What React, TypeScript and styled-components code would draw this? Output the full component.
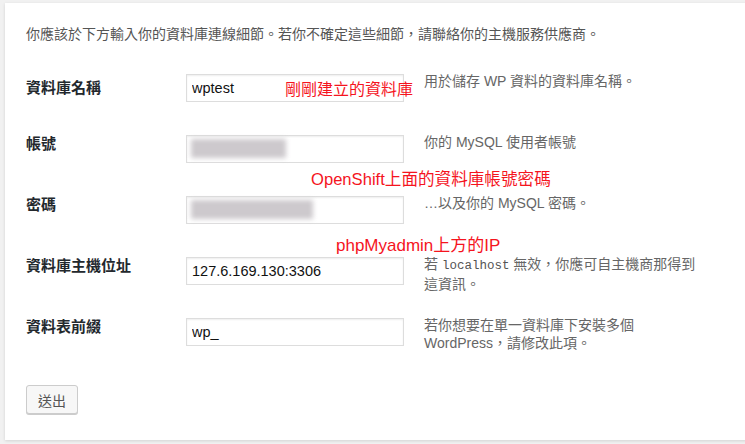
import React from "react";
import styled, { createGlobalStyle, css } from "styled-components";

const Global = createGlobalStyle`
  html, body { margin: 0; padding: 0; background: #f1f1f1; }
  body { font-family: "Liberation Sans", Arial, "Noto Sans CJK TC", sans-serif; }
`;

const Page = styled.div`
  padding: 3px 0 0 5px;
  height: 444px;
  box-sizing: border-box;
  overflow: hidden;
`;

const Card = styled.div`
  position: relative;
  background: #fff;
  box-shadow: 0 1px 3px rgba(0, 0, 0, 0.13);
  padding: 21px 21px 26px;
  width: 760px;
  box-sizing: border-box;
`;

const Intro = styled.p`
  margin: 0;
  font-size: 14px;
  line-height: 21px;
  color: #555;
`;

const Table = styled.div`
  margin-top: 14px;
  display: flex;
  flex-direction: column;
`;

const Row = styled.div`
  display: grid;
  grid-template-columns: 160px 218px 1fr;
  height: 61px;
  align-items: start;
`;

const Label = styled.div<{ $drop?: number }>`
  padding-top: ${(p) => 13 + (p.$drop ?? 0)}px;
  font-size: 15px;
  line-height: 21px;
  font-weight: bold;
  color: #23282d;
`;

const fieldLook = css`
  box-sizing: border-box;
  width: 218px;
  height: 28px;
  margin: 15px 0 0;
  border: 1px solid #ddd;
  box-shadow: inset 0 1px 2px rgba(0, 0, 0, 0.07);
  background: #fff;
`;

const Input = styled.input`
  ${fieldLook};
  padding: 0 5px;
  font-family: "Liberation Sans", Arial, sans-serif;
  font-size: 14.5px;
  color: #111;
  outline: none;
`;

const MaskedField = styled.div`
  ${fieldLook};
  display: flex;
  align-items: flex-start;
  padding: 3px 4px;
`;

const Smudge = styled.span<{ $w: number }>`
  width: ${(p) => p.$w}px;
  height: 19px;
  background: #cdc9cd;
  filter: blur(2.5px);
`;

const Desc = styled.div`
  padding: 13px 0 0 20px;
  font-size: 14px;
  line-height: 18px;
  color: #666;
  white-space: nowrap;
`;

const Code = styled.code`
  font-family: "Liberation Mono", "Courier New", monospace;
  font-size: 12.5px;
  color: #555;
`;

const Actions = styled.div`
  margin-top: 21px;
`;

const Button = styled.button`
  height: 29px;
  padding: 0 11px;
  border: 1px solid #ccc;
  border-radius: 3px;
  background: #f7f7f7;
  box-shadow: 0 1px 0 #ccc;
  font-family: "Liberation Sans", Arial, "Noto Sans CJK TC", sans-serif;
  font-size: 14px;
  color: #555;
  cursor: pointer;
`;

const Note = styled.span<{ $x: number; $y: number; $size?: number }>`
  position: absolute;
  left: ${(p) => p.$x}px;
  top: ${(p) => p.$y}px;
  font-size: ${(p) => p.$size ?? 16}px;
  line-height: 20px;
  color: #f5141e;
  white-space: nowrap;
  pointer-events: none;
`;

type Field = {
  label: string;
  value?: string;
  blur?: number;
  desc: React.ReactNode;
  drop?: number;
};

const fields: Field[] = [
  { label: "資料庫名稱", value: "wptest", desc: "用於儲存 WP 資料的資料庫名稱。", drop: 5 },
  { label: "帳號", blur: 95, desc: "你的 MySQL 使用者帳號" },
  { label: "密碼", blur: 122, desc: "…以及你的 MySQL 密碼。" },
  {
    label: "資料庫主機位址",
    value: "127.6.169.130:3306",
    desc: (
      <>
        若 <Code>localhost</Code> 無效，你應可自主機商那得到
        <br />
        這資訊。
      </>
    ),
  },
  {
    label: "資料表前綴",
    value: "wp_",
    desc: (
      <>
        若你想要在單一資料庫下安裝多個
        <br />
        WordPress，請修改此項。
      </>
    ),
  },
];

export default function App() {
  return (
    <>
      <Global />
      <Page>
        <Card>
          <Intro>你應該於下方輸入你的資料庫連線細節。若你不確定這些細節，請聯絡你的主機服務供應商。</Intro>
          <Table>
            {fields.map((f) => (
              <Row key={f.label}>
                <Label $drop={f.drop}>{f.label}</Label>
                {f.blur ? (
                  <MaskedField>
                    <Smudge $w={f.blur} />
                  </MaskedField>
                ) : (
                  <Input readOnly value={f.value ?? ""} />
                )}
                <Desc>{f.desc}</Desc>
              </Row>
            ))}
          </Table>
          <Actions>
            <Button type="button">送出</Button>
          </Actions>
          <Note $x={280} $y={77}>剛剛建立的資料庫</Note>
          <Note $x={306} $y={167} $size={16.6}>OpenShift上面的資料庫帳號密碼</Note>
          <Note $x={331} $y={233} $size={17}>phpMyadmin上方的IP</Note>
        </Card>
      </Page>
    </>
  );
}
